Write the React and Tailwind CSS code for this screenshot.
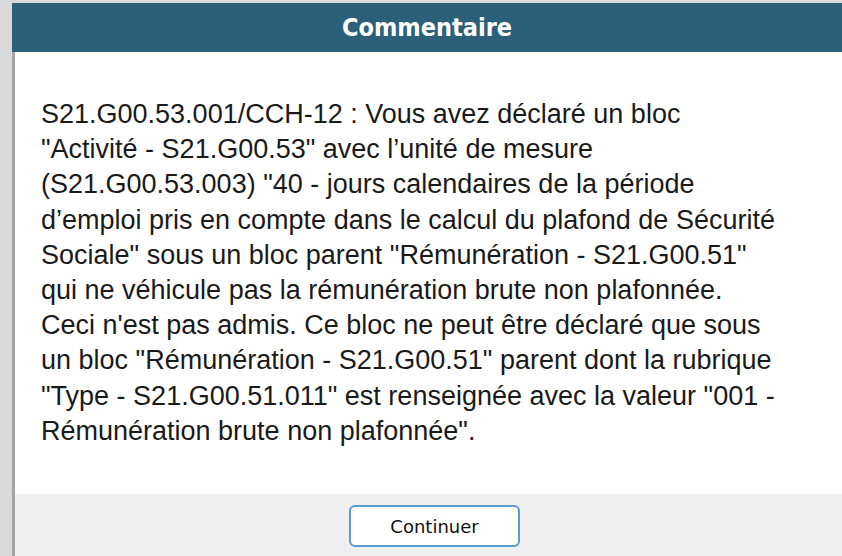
import React from 'react';

const lines = [
  'S21.G00.53.001/CCH-12 : Vous avez déclaré un bloc',
  '"Activité - S21.G00.53" avec l\u2019unité de mesure',
  '(S21.G00.53.003) "40 - jours calendaires de la période',
  'd\u2019emploi pris en compte dans le calcul du plafond de Sécurité',
  'Sociale" sous un bloc parent "Rémunération - S21.G00.51"',
  'qui ne véhicule pas la rémunération brute non plafonnée.',
  "Ceci n'est pas admis. Ce bloc ne peut être déclaré que sous",
  'un bloc "Rémunération - S21.G00.51" parent dont la rubrique',
  '"Type - S21.G00.51.011" est renseignée avec la valeur "001 -',
  'Rémunération brute non plafonnée".',
];

const App = () => {
  return (
    <div className="h-[556px] w-[842px] overflow-hidden bg-[#d9d9d9] pl-[12px] pt-[3px]">
      <div className="flex h-full flex-col">
        {/* Titre */}
        <div className="flex h-[49px] items-center justify-center bg-[#2c6079]">
          <span className="text-[25px] font-bold text-white [font-family:'DejaVu_Sans_Condensed','DejaVu_Sans',sans-serif] [font-stretch:condensed]">
            Commentaire
          </span>
        </div>

        {/* Message */}
        <div className="h-[442px] border-l-[3px] border-[#a3a3a3] bg-white pl-[26px] pt-[45px]">
          <p className="text-[27px] leading-[35.2px] text-[#1a1a1a] [font-family:'Liberation_Sans',Arial,sans-serif]">
            {lines.map((l, i) => (
              <span key={i} className="block whitespace-nowrap">{l}</span>
            ))}
          </p>
        </div>

        {/* Pied */}
        <div className="flex flex-1 justify-center border-l-[3px] border-[#a3a3a3] bg-[#efefef] pt-[11px]">
          <button className="ml-[12px] h-[42px] w-[171px] rounded-[6px] border-2 border-[#5b9bd5] bg-white text-[18px] text-[#111] [font-family:'DejaVu_Sans',sans-serif]">
            Continuer
          </button>
        </div>
      </div>
    </div>
  );
};

export default App;
